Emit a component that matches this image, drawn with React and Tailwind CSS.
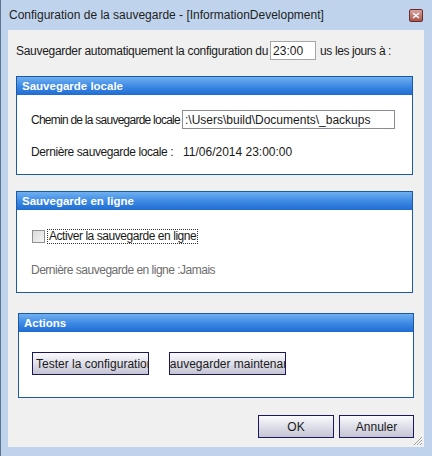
import React from "react";

const font = { fontFamily: '"Liberation Sans", Arial, sans-serif' };

function Panel({ title, children, className = "" }) {
  return (
    <div className={`border border-[#1c5aa8] bg-white ${className}`}>
      <div className="h-[18px] bg-gradient-to-b from-[#6fb0f0] via-[#3e8ae4] to-[#1f6cd2] pl-[5px] text-[11.5px] font-bold leading-[18px] text-white">
        {title}
      </div>
      {children}
    </div>
  );
}

function Button({ children, className = "" }) {
  return (
    <div
      className={`flex h-[23px] items-center overflow-hidden whitespace-nowrap border border-[#1a1a5a] bg-gradient-to-b from-[#fafafe] to-[#c4c4d4] text-[12px] text-[#1a1a1a] ${className}`}
    >
      {children}
    </div>
  );
}

export default function App() {
  return (
    <div
      className="relative flex h-[456px] w-[432px] flex-col border-l border-[#5d7390] bg-[#bfd4ec] pr-[8px] pb-[9px] pl-[7px]"
      style={font}
    >
      {/* Title bar */}
      <div className="flex h-[30px] shrink-0 items-center justify-between pl-[1px]">
        <span className="text-[12px] text-[#1e1e1e]">
          Configuration de la sauvegarde - [InformationDevelopment]
        </span>
        <div className="mr-[1px] flex h-[13px] w-[14px] items-center justify-center rounded-[2px] border border-[#6a2c2c] bg-gradient-to-b from-[#d9a49c] to-[#a8564c]">
          <svg width="8" height="7" viewBox="0 0 8 7">
            <path d="M1 1 L7 6 M7 1 L1 6" stroke="#fff" strokeWidth="1.6" />
          </svg>
        </div>
      </div>

      {/* Content */}
      <div className="relative flex flex-1 flex-col bg-[#f0f0f0] px-[8px] pt-[11px] text-[12px] text-[#1a1a1a]">
        <div className="flex h-[19px] items-center">
          <span className="tracking-[-0.3px]">Sauvegarder automatiquement la configuration du</span>
          <div className="ml-[2px] flex h-[19px] w-[46px] items-center border border-[#a6a6a6] bg-white pl-[2px]">
            23:00
          </div>
          <span className="ml-[4px] tracking-[-0.4px]">us les jours à :</span>
        </div>

        <Panel title="Sauvegarde locale" className="mt-[16px] mr-[3px] h-[99px]">
          <div className="px-[14px] pt-[15px]">
            <div className="flex h-[19px] items-center">
              <span className="w-[151px] shrink-0 whitespace-nowrap tracking-[-0.75px]">
                Chemin de la sauvegarde locale
              </span>
              <div className="flex h-[19px] w-[213px] items-center border border-[#8a8a9a] bg-white pl-[2px]">
                :\Users\build\Documents\_backups
              </div>
            </div>
            <div className="mt-[13px] flex h-[19px] items-center">
              <span className="w-[152px] shrink-0 tracking-[-0.4px]">Dernière sauvegarde locale :</span>
              <span>11/06/2014 23:00:00</span>
            </div>
          </div>
        </Panel>

        <Panel title="Sauvegarde en ligne" className="mt-[16px] mr-[3px] h-[102px]">
          <div className="px-[14px] pt-[19px]">
            <div className="flex h-[15px] items-center pl-[1px]">
              <div className="h-[13px] w-[13px] border border-[#8e8f8f] bg-gradient-to-br from-[#dcdcdc] to-[#f4f4f4]" />
              <span className="ml-[2px] border border-dotted border-[#333] px-[1px] leading-[13px] tracking-[-0.45px]">
                Activer la sauvegarde en ligne
              </span>
            </div>
            <div className="mt-[17px] flex h-[18px] items-center text-[#6d6d6d] tracking-[-0.5px]">
              Dernière sauvegarde en ligne :Jamais
            </div>
          </div>
        </Panel>

        <Panel title="Actions" className="mt-[20px] mr-[2px] ml-[2px] h-[85px]">
          <div className="flex gap-[20px] px-[13px] pt-[20px]">
            <Button className="w-[117px] justify-start pl-[3px]">Tester la configuration</Button>
            <Button className="w-[117px] justify-center">Sauvegarder maintenant</Button>
          </div>
        </Panel>

        <div className="mt-[17px] flex justify-end gap-[5px] pr-[2px]">
          <Button className="w-[76px] justify-center">OK</Button>
          <Button className="w-[75px] justify-center">Annuler</Button>
        </div>

        <svg className="absolute right-[1px] bottom-[1px]" width="11" height="11" viewBox="0 0 11 11">
          <path d="M10 2 L2 10 M10 5 L5 10 M10 8 L8 10" stroke="#9a9a9a" strokeWidth="1" />
          <path d="M10 3 L3 10 M10 6 L6 10 M10 9 L9 10" stroke="#fff" strokeWidth="1" />
        </svg>
      </div>
    </div>
  );
}
